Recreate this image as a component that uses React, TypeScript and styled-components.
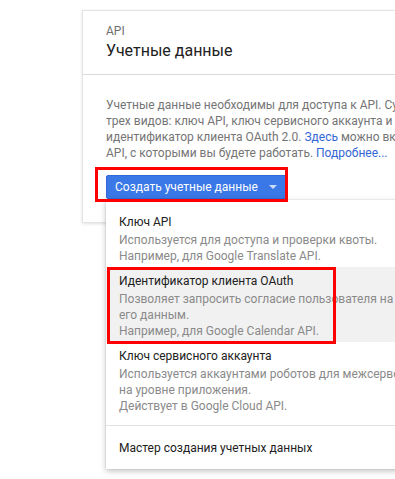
import React from "react";
import styled, { createGlobalStyle } from "styled-components";

const Global = createGlobalStyle`
  html, body {
    margin: 0;
    padding: 0;
    background: #ffffff;
    overflow: hidden;
    width: 395px;
    height: 479px;
  }
  body {
    font-family: Roboto, "Noto Sans", Arial, sans-serif;
    -webkit-font-smoothing: antialiased;
  }
`;

const Page = styled.div`
  width: 395px;
  height: 479px;
  overflow: hidden;
  padding: 10px 0 0 82px;
  box-sizing: border-box;
`;

const Card = styled.section`
  width: 340px;
  background: #fff;
  border: 1px solid #e3e3e3;
  border-right: none;
  box-shadow: 0 1px 3px rgba(0, 0, 0, 0.12);
`;

const Header = styled.header`
  padding: 12px 23px 11px;
  border-bottom: 1px solid #dadada;
`;

const Kicker = styled.div`
  font-size: 12px;
  line-height: 16px;
  color: #6f6f6f;
`;

const Title = styled.h1`
  margin: 0;
  font-size: 16px;
  font-weight: 400;
  line-height: 24px;
  color: #212121;
`;

const Body = styled.div`
  padding: 22px 0 23px 23px;
`;

const Paragraph = styled.p`
  margin: 0 0 14px;
  font-size: 12px;
  line-height: 16px;
  color: #757575;
  white-space: nowrap;
`;

const Link = styled.a`
  color: #3367d6;
  text-decoration: none;
`;

const ButtonWrap = styled.div`
  position: relative;
  display: inline-block;
`;

const PrimaryButton = styled.button`
  display: flex;
  align-items: center;
  gap: 11px;
  height: 24px;
  padding: 0 9px 0 8px;
  background: #3b78e7;
  border: 1px solid #3367d6;
  border-radius: 2px;
  color: #fff;
  font-family: Roboto, "Noto Sans", Arial, sans-serif;
  font-size: 12px;
  line-height: 16px;
  cursor: pointer;
`;

const Caret = styled.span`
  width: 0;
  height: 0;
  border-left: 4px solid transparent;
  border-right: 4px solid transparent;
  border-top: 4px solid rgba(255, 255, 255, 0.75);
`;

const Highlight = styled.div<{ $l: number; $t: number; $w: number; $h: number }>`
  position: absolute;
  left: ${(p) => p.$l}px;
  top: ${(p) => p.$t}px;
  width: ${(p) => p.$w}px;
  height: ${(p) => p.$h}px;
  border: 3px solid #f00;
  box-sizing: border-box;
  z-index: 5;
  pointer-events: none;
`;

const Menu = styled.div`
  position: absolute;
  left: 0;
  top: 25px;
  width: 320px;
  padding: 8px 0;
  background: #fff;
  box-shadow: 0 2px 6px rgba(0, 0, 0, 0.25), 0 0 1px rgba(0, 0, 0, 0.2);
  z-index: 3;
`;

const Item = styled.div<{ $active?: boolean }>`
  position: relative;
  padding: 6px 13px 3px;
  background: ${(p) => (p.$active ? "#f1f1f1" : "transparent")};
  white-space: nowrap;
`;

const ItemTitle = styled.div`
  font-size: 12px;
  line-height: 16px;
  color: #212121;
  margin-bottom: 2px;
`;

const ItemDesc = styled.div`
  font-size: 12px;
  line-height: 16px;
  color: #8a8a8a;
`;

const Divider = styled.hr`
  margin: 8px 0;
  border: none;
  border-top: 1px solid #e0e0e0;
`;

export default function App() {
  return (
    <>
      <Global />
      <Page>
        <Card>
          <Header>
            <Kicker>API</Kicker>
            <Title>Учетные данные</Title>
          </Header>
          <Body>
            <Paragraph>
              Учетные данные необходимы для доступа к API. Существуют учетные данные
              <br />
              трех видов: ключ API, ключ сервисного аккаунта и
              <br />
              идентификатор клиента OAuth 2.0. <Link href="#">Здесь</Link> можно включить те
              <br />
              API, с которыми вы будете работать. <Link href="#">Подробнее...</Link>
            </Paragraph>
            <ButtonWrap>
              <PrimaryButton>
                Создать учетные данные
                <Caret />
              </PrimaryButton>
              <Highlight $l={-11} $t={-8} $w={193} $h={35} />
              <Menu>
                <Item>
                  <ItemTitle>Ключ API</ItemTitle>
                  <ItemDesc>Используется для доступа и проверки квоты.</ItemDesc>
                  <ItemDesc>Например, для Google Translate API.</ItemDesc>
                </Item>
                <Item $active>
                  <ItemTitle>Идентификатор клиента OAuth</ItemTitle>
                  <ItemDesc>Позволяет запросить согласие пользователя на доступ к</ItemDesc>
                  <ItemDesc>его данным.</ItemDesc>
                  <ItemDesc>Например, для Google Calendar API.</ItemDesc>
                  <Highlight $l={1} $t={0} $w={229} $h={77} />
                </Item>
                <Item>
                  <ItemTitle>Ключ сервисного аккаунта</ItemTitle>
                  <ItemDesc>Используется аккаунтами роботов для межсерверной аутентификации</ItemDesc>
                  <ItemDesc>на уровне приложения.</ItemDesc>
                  <ItemDesc>Действует в Google Cloud API.</ItemDesc>
                </Item>
                <Divider />
                <Item>
                  <ItemTitle>Мастер создания учетных данных</ItemTitle>
                </Item>
              </Menu>
            </ButtonWrap>
          </Body>
        </Card>
      </Page>
    </>
  );
}
